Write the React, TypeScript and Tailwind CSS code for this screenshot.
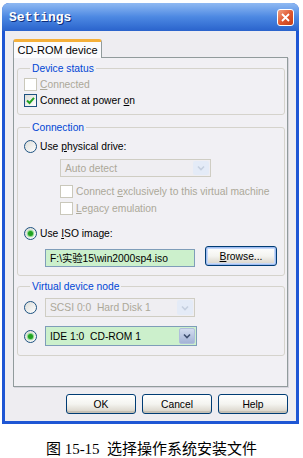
import React from 'react';

const ui = "font-['Liberation_Sans','Noto_Sans_CJK_SC',Arial,sans-serif] text-[10.3px] leading-[13px]";

const Check = ({ checked = false, disabled = false }: { checked?: boolean; disabled?: boolean }) => (
  <span
    className={`w-[13px] h-[13px] shrink-0 border flex items-center justify-center ${
      disabled ? 'border-[#cac8bb] bg-white' : 'border-[#1c5180] bg-linear-to-br from-[#dcdcd7] to-white'
    }`}
  >
    {checked && (
      <svg width="9" height="9" viewBox="0 0 9 9">
        <polyline points="1,4.5 3.5,7 8,1.8" fill="none" stroke="#21a121" strokeWidth="2" />
      </svg>
    )}
  </span>
);

const Radio = ({ checked = false }: { checked?: boolean }) => (
  <span className="w-[13px] h-[13px] shrink-0 rounded-full border border-[#1c5180] bg-linear-to-br from-[#dcdcd7] to-white flex items-center justify-center">
    {checked && <span className="w-[5px] h-[5px] rounded-full bg-[#21a121] shadow-[0_0_1px_1px_#7fd67f]" />}
  </span>
);

const Chevron = ({ color }: { color: string }) => (
  <svg width="8" height="6" viewBox="0 0 8 6">
    <polyline points="1,1.5 4,4.5 7,1.5" fill="none" stroke={color} strokeWidth="1.6" />
  </svg>
);

const Select = ({ text, disabled = false, green = false, w }: { text: string; disabled?: boolean; green?: boolean; w: string }) => (
  <div
    className={`${w} flex items-stretch border ${
      disabled ? 'border-[#cfcdc3] bg-[#efeef2] text-[#aca899]' : 'border-[#7f9db9] text-black'
    } ${green ? 'bg-[#ccf0cc]' : ''}`}
  >
    <span className="flex-1 flex items-center pl-[4px] whitespace-pre">{text}</span>
    <span
      className={`w-[16px] m-[1px] rounded-[2px] flex items-center justify-center ${
        disabled ? 'bg-[#e4ebf7]' : 'bg-linear-to-b from-[#d3dcef] to-[#a3b3d6] border border-[#b0bedc]'
      }`}
    >
      <Chevron color={disabled ? '#c5cfdf' : '#3f4f70'} />
    </span>
  </div>
);

const Btn = ({ children, focus = false, w }: { children: React.ReactNode; focus?: boolean; w: string }) => (
  <button
    className={`${w} h-[20px] rounded-[3px] border border-[#003c74] bg-linear-to-b from-white via-[#f4f4f0] to-[#d6d0c5] flex items-center justify-center ${
      focus ? 'shadow-[inset_0_0_0_1px_#9fbcf0,inset_0_0_0_2px_#c5d8f8]' : 'shadow-[inset_0_-2px_0_#c5c0b5]'
    }`}
  >
    {children}
  </button>
);

export default function App() {
  return (
    <div className={`w-[303px] h-[458px] bg-white pt-[3px] pl-[2px] ${ui}`}>
      <div className="w-[297px] rounded-t-[7px] bg-[#1e56d4] overflow-hidden">
        {/* title bar */}
        <div className="h-[28px] flex items-center justify-between pl-[7px] pr-[5px] bg-linear-to-b from-[#8fb9f2] via-[#4c88e2] to-[#2a63cc]">
          <span className="font-['Liberation_Mono',monospace] font-bold text-[13px] text-white [text-shadow:1px_1px_0_#0b2c7a]">
            Settings
          </span>
          <span className="w-[17px] h-[17px] rounded-[3px] border border-white bg-linear-to-br from-[#f0a080] via-[#e0582f] to-[#c43d14] flex items-center justify-center">
            <svg width="9" height="9" viewBox="0 0 9 9">
              <path d="M1 1 L8 8 M8 1 L1 8" stroke="white" strokeWidth="1.8" />
            </svg>
          </span>
        </div>
        {/* client */}
        <div className="mx-[3px] mb-[3px] bg-[#eeedf1] px-[8px] pt-[8px] pb-[7px]">
          <div className="flex">
            <div className="w-[89px] h-[19px] border border-b-0 border-[#919b9c] border-t-[3px] border-t-[#f5b03a] rounded-t-[3px] bg-[#fbfbfd] flex items-center justify-center -mb-px relative text-[11px]">
              CD-ROM device
            </div>
          </div>
          <div className="h-[330px] border border-[#919b9c] bg-[#f1f0f4] pl-[3px] pr-[2px] pt-[4px] shadow-[1px_1px_0_#d5d4dc]">
            <fieldset className="border border-[#d5d3cc] rounded-[3px] pl-[6px] pb-[6px]">
              <legend className="ml-[6px] px-[2px] text-[#0046d5] leading-[13px]">Device status</legend>
              <div className="h-[16px] mt-px flex items-center gap-[3px] text-[#aca899]">
                <Check disabled />
                <span><u>C</u>onnected</span>
              </div>
              <div className="h-[16px] flex items-center gap-[3px]">
                <Check checked />
                <span>Connect at power <u>o</u>n</span>
              </div>
            </fieldset>
            <fieldset className="mt-[6px] border border-[#d5d3cc] rounded-[3px] pl-[6px] pb-[8px]">
              <legend className="ml-[6px] px-[2px] text-[#0046d5] leading-[13px]">Connection</legend>
              <div className="h-[16px] mt-[4px] flex items-center gap-[3px]">
                <Radio />
                <span>Use <u>p</u>hysical drive:</span>
              </div>
              <div className="mt-[5px] pl-[36px]">
                <Select text="Auto detect" disabled w="w-[151px] h-[18px]" />
              </div>
              <div className="h-[16px] mt-[6px] pl-[36px] flex items-center gap-[3px] text-[#aca899]">
                <Check disabled />
                <span>Connect <u>e</u>xclusively to this virtual machine</span>
              </div>
              <div className="h-[16px] mt-px pl-[36px] flex items-center gap-[3px] text-[#aca899]">
                <Check disabled />
                <span><u>L</u>egacy emulation</span>
              </div>
              <div className="h-[16px] mt-[9px] flex items-center gap-[3px]">
                <Radio checked />
                <span>Use <u>I</u>SO image:</span>
              </div>
              <div className="h-[21px] mt-[5px] pl-[21px] flex items-start gap-[10px]">
                <div className="mt-[3px] w-[150px] h-[18px] border border-[#7f9db9] bg-[#ccf0cc] flex items-center pl-[4px]">
                  F:\实验15\win2000sp4.iso
                </div>
                <Btn focus w="w-[72px]">
                  <span><u>B</u>rowse...</span>
                </Btn>
              </div>
            </fieldset>
            <fieldset className="mt-[4px] border border-[#d5d3cc] rounded-[3px] pl-[6px] pb-[9px]">
              <legend className="ml-[6px] px-[2px] text-[#0046d5] leading-[13px]">Virtual device node</legend>
              <div className="mt-[5px] flex items-center gap-[8px]">
                <Radio />
                <Select text="SCSI 0:0  Hard Disk 1" disabled w="w-[150px] h-[19px]" />
              </div>
              <div className="mt-[9px] flex items-center gap-[8px]">
                <Radio checked />
                <Select text="IDE 1:0  CD-ROM 1" green w="w-[152px] h-[20px]" />
              </div>
            </fieldset>
          </div>
          <div className="mt-[7px] flex justify-end gap-[6px]">
            <Btn w="w-[70px]">OK</Btn>
            <Btn w="w-[70px]">Cancel</Btn>
            <Btn w="w-[70px]">Help</Btn>
          </div>
        </div>
      </div>
      <div className="mt-[16px] pr-[2px] text-center font-['Liberation_Serif','Noto_Sans_CJK_SC',serif] text-[15px] leading-[18px] text-black whitespace-pre">
        {'图 15-15  选择操作系统安装文件'}
      </div>
    </div>
  );
}
